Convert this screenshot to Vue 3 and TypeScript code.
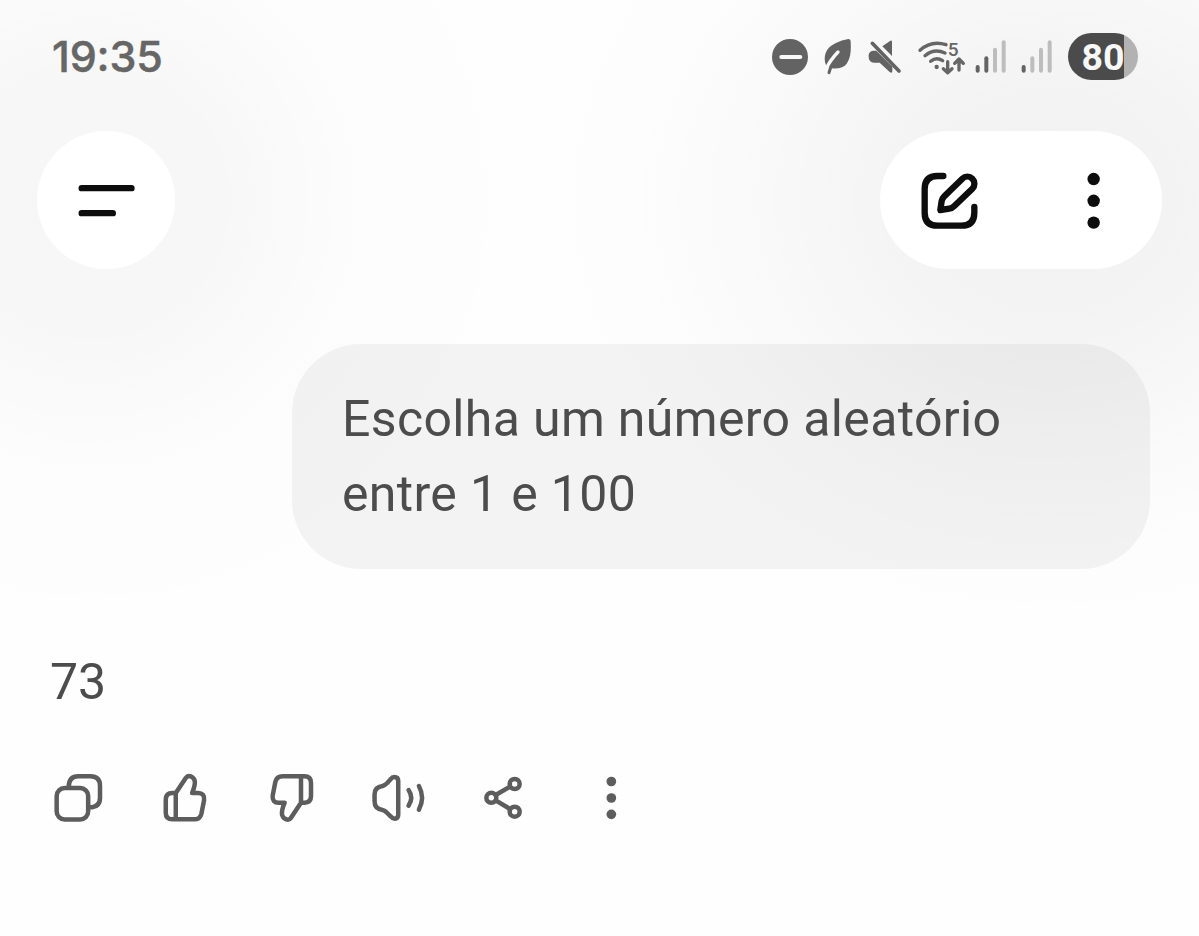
<script setup lang="ts">
interface Bars { id: string; levels: boolean[] }

const hours = '19'
const minutes = '35'
const battery = 80
const prompt = 'Escolha um número aleatório entre 1 e 100'
const answer = '73'
const signals: Bars[] = [
  { id: 'sim1', levels: [true, true, false, false] },
  { id: 'sim2', levels: [true, false, false, false] },
]
const barTops = [78, 52, 26, 4]
const dots = [177, 242.5, 308]
</script>

<template>
  <main class="screen">
    <header class="status">
      <span class="time">{{ hours }}<span class="colon">:</span>{{ minutes }}</span>
      <div class="indicators">
        <svg class="dnd" viewBox="0 0 36 36"><circle cx="18" cy="18" r="18" /><path class="cut" d="M9.3 18h19" /></svg>
        <svg class="leaf" viewBox="190 54 86 114">
          <path d="M266 57Q273 57 273 65C274 90 274 112 262 130C252 144 236 147 217 145L201 138C193 126 193 105 202 91C214 72 240 62 266 57Z" />
          <path class="cut" d="M235 96Q210 122 199 148" />
          <path class="stem" d="M218 134Q211 145 208 158" />
        </svg>
        <svg class="mute" viewBox="325 58 102 108">
          <path d="M368 80L391 64Q397 60 397 67V109ZM340 93H350L398 141V154Q398 163 390 157L360 129H343Q327 128 327 112V106Q328 95 340 93Z" />
          <path class="slash" d="M338 71L418 154" />
        </svg>
        <svg class="wifi" viewBox="24 46 144 132">
          <path d="M33 92Q66 61 111 75M48 108Q76 85 108 100M65 125Q82 111 101 123M116 126V158M103 147L116 159L129 147M150 151V120M137 131L150 118L163 131" />
          <circle cx="83" cy="142" r="6.5" />
          <text x="116" y="109">5</text>
        </svg>
        <svg v-for="s in signals" :key="s.id" class="bars" viewBox="0 0 96 104">
          <rect v-for="(on, i) in s.levels" :key="i" :class="{ off: !on }" :x="2 + i * 26" :y="barTops[i]" width="12" :height="101 - barTops[i]" rx="6" />
        </svg>
        <div class="battery">{{ battery }}</div>
      </div>
    </header>

    <nav class="toolbar">
      <button class="round" aria-label="Menu">
        <svg class="menu" viewBox="0 0 180 120"><path d="M17 24.500H166.500M17 99.500H110.500" /></svg>
      </button>
      <div class="pill">
        <svg class="edit" viewBox="148 150 180 180">
          <path d="M221 168H204Q165 168 165 207V278Q165 317 204 317H275Q314 317 314 278V261" />
          <path d="M212 270L216 243Q218 235 224 229L278 176A21 21 0 0 1 308 206L254 258Q247 265 239 266Z" />
        </svg>
        <svg class="more" viewBox="652 150 40 180"><circle v-for="y in dots" :key="y" cx="672" :cy="y" r="18.700" /></svg>
      </div>
    </nav>

    <section class="chat">
      <p class="bubble">{{ prompt }}</p>
      <p class="answer">{{ answer }}</p>
      <div class="actions">
        <svg viewBox="24 23 180 180">
          <rect x="50" y="83" width="94.500" height="94.500" rx="24" />
          <path d="M86 81Q86 48 115 48H151Q180 48 180 77V113Q180 141 148 141" />
        </svg>
        <svg viewBox="344.7 23 180 180">
          <path d="M407 98H397Q377 98 377 118V157Q377 177 397 177H462Q480 177 484 160L492 119Q494 98 474 98H456Q466 74 464 62Q460 48 446 47Q441 47 437 53L407 98V177" />
        </svg>
        <svg viewBox="35.500 23 180 180">
          <path transform="translate(559.500 225) rotate(180)" d="M407 98H397Q377 98 377 118V157Q377 177 397 177H462Q480 177 484 160L492 119Q494 98 474 98H456Q466 74 464 62Q460 48 446 47Q441 47 437 53L407 98V177" />
        </svg>
        <svg viewBox="354.300 23 180 180">
          <path d="M445 62Q445 50 433 50Q427 50 422 57L412 68Q405 75 398 77Q374 80 374 102V123Q374 146 398 149Q405 150 412 158L422 168Q428 175 434 175Q445 174 445 163Z" />
          <path d="M476 89Q492 112 476 136M507 77Q526 112 507 148" />
        </svg>
        <svg viewBox="44 23 180 180">
          <circle cx="163" cy="71" r="15" /><circle cx="93" cy="112.500" r="15" /><circle cx="163" cy="154" r="15" />
          <path d="M106 104L149 79M106 120L149 146" />
        </svg>
        <svg class="solid" viewBox="363 23 180 180">
          <circle cx="454" cy="63.500" r="14.500" /><circle cx="454" cy="113" r="14.500" /><circle cx="454" cy="162" r="14.500" />
        </svg>
      </div>
    </section>
  </main>
</template>

<style>
body { margin: 0; background: #fefefe; }
</style>

<style scoped>
.screen {
  box-sizing: border-box;
  width: 1199px;
  height: 936px;
  overflow: hidden;
  font-family: Roboto, "Liberation Sans", sans-serif;
  background:
    radial-gradient(ellipse 530px 450px at 1050px 200px, rgba(0,0,0,.052) 0%, rgba(0,0,0,.044) 25%, rgba(0,0,0,.019) 55%, rgba(0,0,0,.004) 80%, transparent 100%),
    radial-gradient(circle 430px at 90px 200px, rgba(0,0,0,.031) 0%, rgba(0,0,0,.026) 30%, rgba(0,0,0,.009) 60%, rgba(0,0,0,.002) 85%, transparent 100%),
    #fefefe;
}
svg { display: block; flex: none; }
.status {
  display: flex;
  justify-content: space-between;
  align-items: center;
  height: 113px;
  padding: 0 61px 0 52px;
}
.time { margin-top: -1px; font: 500 43px/50px Inter, sans-serif; letter-spacing: -.2px; color: #666; -webkit-text-stroke: .5px #666; }
.colon { vertical-align: 1px; line-height: 1; }
.indicators { display: flex; align-items: center; fill: #636363; }
.dnd { width: 36px; height: 36px; }
.cut { fill: none; stroke: #f8f8f8; stroke-width: 4; stroke-linecap: round; }
.leaf { width: 28.700px; height: 38px; margin-left: 14.600px; }
.leaf .cut { stroke-width: 10; }
.leaf .stem { fill: none; stroke: #636363; stroke-width: 9; stroke-linecap: round; }
.mute { width: 34px; height: 36px; margin-left: 16.300px; }
.slash { fill: none; stroke: #636363; stroke-width: 11; stroke-linecap: round; }
.wifi { width: 48px; height: 44px; margin-left: 15.700px; overflow: visible; }
.wifi path { fill: none; stroke: #666; stroke-width: 10; stroke-linecap: round; stroke-linejoin: round; }
.wifi text { font: 500 57px Roboto, sans-serif; fill: #666; }
.bars { width: 32px; height: 34.700px; margin-left: 9.500px; }
.bars + .bars { margin-left: 13.700px; }
.bars .off { fill: #bdbdbd; }
.battery {
  width: 70px;
  height: 47px;
  margin-left: 15.500px;
  border-radius: 24px;
  background: linear-gradient(90deg, #4b4b4b 80%, #b2b2b2 80%);
  color: #f8f8f8;
  font-weight: 700;
  font-size: 37.500px;
  line-height: 48px;
  text-align: center;
}
.toolbar { display: flex; justify-content: space-between; padding: 18.400px 36.700px 0 37.300px; }
.round {
  display: flex;
  align-items: center;
  justify-content: center;
  width: 138px;
  height: 138px;
  padding: 0;
  border: 0;
  border-radius: 50%;
  background: #fff;
}
.menu { width: 60px; height: 40px; fill: none; stroke: #0d0d0d; stroke-width: 19; stroke-linecap: round; }
.pill {
  box-sizing: border-box;
  display: flex;
  align-items: center;
  justify-content: space-between;
  width: 282px;
  height: 138px;
  padding: 0 62px 0 39px;
  border-radius: 69px;
  background: #fff;
}
.edit { width: 60px; height: 60px; fill: none; stroke: #0d0d0d; stroke-width: 19; stroke-linecap: round; stroke-linejoin: round; }
.more { width: 13.300px; height: 60px; fill: #0d0d0d; }
.chat { display: flex; flex-direction: column; padding: 75px 49px 0 50px; color: #4c4c4c; }
.bubble, .answer { margin: 0; font-size: 50px; line-height: 75px; letter-spacing: .350px; }
.bubble {
  box-sizing: border-box;
  align-self: flex-end;
  width: 858px;
  height: 225px;
  padding: 37.600px 120px 36px 50px;
  border-radius: 69px;
  background: rgba(0,0,0,.045);
}
.answer { margin-top: 76px; letter-spacing: 0; }
.actions { display: flex; gap: 46.600px; margin: 47.500px 0 0 -1.700px; }
.actions svg {
  width: 60px;
  height: 60px;
  fill: none;
  stroke: #5d5d5d;
  stroke-width: 13.500;
  stroke-linecap: round;
  stroke-linejoin: round;
}
.actions .solid { fill: #5d5d5d; stroke: none; }
</style>
